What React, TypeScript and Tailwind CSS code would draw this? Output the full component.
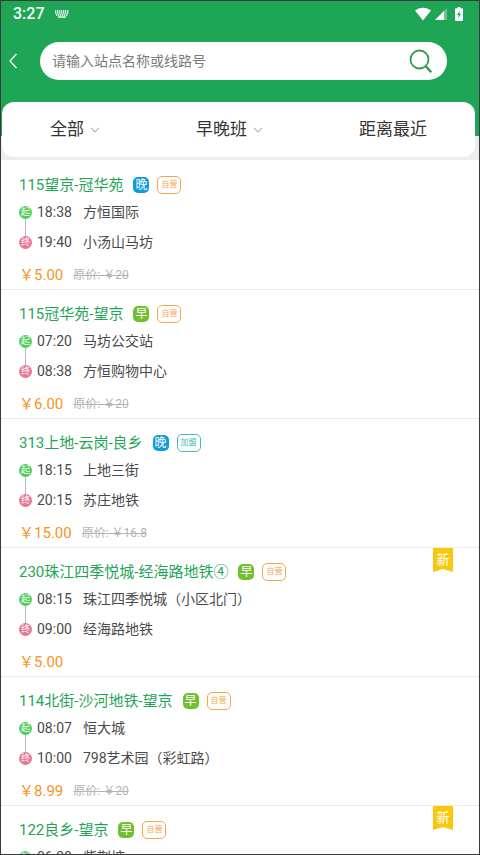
import clsx from "clsx";

type Shift = "早" | "晚";
type Operator = "自营" | "加盟";

interface Stop {
  time: string;
  name: string;
}

interface Line {
  title: string;
  shift: Shift;
  operator: Operator;
  from: Stop;
  to: Stop;
  price: string;
  oldPrice?: string;
  isNew?: boolean;
}

const lines: Line[] = [
  {
    title: "115望京-冠华苑",
    shift: "晚",
    operator: "自营",
    from: { time: "18:38", name: "方恒国际" },
    to: { time: "19:40", name: "小汤山马坊" },
    price: "5.00",
    oldPrice: "20",
  },
  {
    title: "115冠华苑-望京",
    shift: "早",
    operator: "自营",
    from: { time: "07:20", name: "马坊公交站" },
    to: { time: "08:38", name: "方恒购物中心" },
    price: "6.00",
    oldPrice: "20",
  },
  {
    title: "313上地-云岗-良乡",
    shift: "晚",
    operator: "加盟",
    from: { time: "18:15", name: "上地三街" },
    to: { time: "20:15", name: "苏庄地铁" },
    price: "15.00",
    oldPrice: "16.8",
  },
  {
    title: "230珠江四季悦城-经海路地铁④",
    shift: "早",
    operator: "自营",
    from: { time: "08:15", name: "珠江四季悦城（小区北门）" },
    to: { time: "09:00", name: "经海路地铁" },
    price: "5.00",
    isNew: true,
  },
  {
    title: "114北街-沙河地铁-望京",
    shift: "早",
    operator: "自营",
    from: { time: "08:07", name: "恒大城" },
    to: { time: "10:00", name: "798艺术园（彩虹路）" },
    price: "8.99",
    oldPrice: "20",
  },
  {
    title: "122良乡-望京",
    shift: "早",
    operator: "自营",
    from: { time: "06:30", name: "紫荆塘" },
    to: { time: "08:20", name: "望京" },
    price: "8.00",
    isNew: true,
  },
];

const filters = [
  { label: "全部", hasMenu: true },
  { label: "早晚班", hasMenu: true },
  { label: "距离最近", hasMenu: false },
];

function StatusBar() {
  return (
    <div className="flex h-[25px] items-center justify-between pl-3 pr-4 text-white">
      <div className="flex items-center gap-2.5">
        <span className="text-base font-medium">3:27</span>
        <svg className="h-2 w-3.5" viewBox="0 0 14 8" fill="none" stroke="currentColor">
          <path d="M0 1h14M0 3h14M1 5h12" strokeWidth="1.4" strokeDasharray="1.4 .6" />
          <path d="M3 7h8" strokeWidth="1.4" />
        </svg>
      </div>
      <div className="flex items-center">
        <svg className="h-3.5 w-4" viewBox="0 0 16 14" fill="currentColor">
          <path d="M0 3.6C4.4-.3 11.6-.3 16 3.6L8 13.4z" />
        </svg>
        <svg className="ml-1 size-3" viewBox="0 0 12 12" fill="currentColor">
          <path d="M12 0v12H0z" opacity=".35" />
          <path d="M9 3v9H0z" />
        </svg>
        <svg className="ml-2 h-3.5 w-2" viewBox="0 0 8 14">
          <path d="M2.6 0h2.8v1.2H7q1 0 1 1V13q0 1-1 1H1q-1 0-1-1V2.2q0-1 1-1h1.6z" fill="#fff" />
          <path d="M4.8 3.6 2 8h1.7l-.4 3.600L6 7H4.400z" fill="#1fa556" />
        </svg>
      </div>
    </div>
  );
}

function SearchBar() {
  return (
    <div className="flex items-center pl-2 pr-8 pt-4">
      <button type="button" aria-label="返回" className="mr-[23px] text-white">
        <svg className="h-4 w-2" viewBox="0 0 8 16" fill="none" stroke="currentColor" strokeWidth="1.3">
          <path d="M7.5 1 1 8l6.500 7" />
        </svg>
      </button>
      <form className="flex h-[38px] flex-1 items-center rounded-full bg-white pl-3 pr-3.5">
        <input
          type="search"
          aria-label="搜索站点或线路"
          placeholder="请输入站点名称或线路号"
          className="min-w-0 flex-1 bg-transparent text-sm text-gray-800 outline-none placeholder:text-[#7b7b7b]"
        />
        <button type="button" aria-label="搜索">
          <svg className="size-6" viewBox="0 0 24 24" fill="none" stroke="#2f9e4b">
            <circle cx="10.5" cy="10.5" r="9" strokeWidth="1.8" />
            <path d="m16.6 17 5.600 6.200" strokeWidth="2.4" />
          </svg>
        </button>
      </form>
    </div>
  );
}

function FilterTabs() {
  return (
    <div className="relative ml-px mr-1 -mt-[34px] flex h-[55px] items-center justify-between rounded-xl bg-white px-12">
      {filters.map((filter) => (
        <button key={filter.label} type="button" className="flex items-center gap-1.5 text-[17px] text-[#333]">
          {filter.label}
          {filter.hasMenu && (
            <svg className="h-1.5 w-2.5" viewBox="0 0 10 6" fill="none" stroke="#b5b5b5" strokeWidth="1.2">
              <path d="m1 .8 4 4 4-4" />
            </svg>
          )}
        </button>
      ))}
    </div>
  );
}

function StopRow({ stop, mark }: { stop: Stop; mark: "起" | "终" }) {
  return (
    <div className="flex h-[30px] items-center text-sm text-[#4a4a4a]">
      <span
        className={clsx(
          "relative flex size-[13px] items-center justify-center rounded-full text-[9px] leading-none text-white",
          mark === "起" ? "bg-[#4fcf5c]" : "bg-[#e87696]"
        )}
      >
        {mark}
      </span>
      <span className="ml-[5px] w-[46px]">{stop.time}</span>
      <span>{stop.name}</span>
    </div>
  );
}

function LineCard({ line }: { line: Line }) {
  return (
    <li className="relative h-[129px] shrink-0 border-b border-[#ececec] bg-white px-[18px] pt-3">
      <div className="flex h-6 items-center">
        <h2 className="text-[15px] text-[#1fa556]">{line.title}</h2>
        <span
          className={clsx(
            "ml-2.5 flex size-4 items-center justify-center rounded-[5px] text-xs leading-none text-white",
            line.shift === "早" ? "bg-[#6fc02c]" : "bg-[#109bdc]"
          )}
        >
          {line.shift}
        </span>
        <span
          className={clsx(
            "ml-2 flex h-[18px] w-6 items-center justify-center rounded-[5px] border text-[8px] leading-none",
            line.operator === "自营" ? "border-[#f3a94a] text-[#f3a94a]" : "border-[#45bdb3] text-[#45bdb3]"
          )}
        >
          {line.operator}
        </span>
      </div>

      <div className="relative">
        {/* connector between the two stops */}
        <div className="absolute left-1.5 top-5 h-5 w-px bg-[#bbb]" />
        <StopRow stop={line.from} mark="起" />
        <StopRow stop={line.to} mark="终" />
      </div>

      <div className="mt-2 flex items-center gap-2.5">
        <span className="text-[15px] leading-5 text-[#f7931e]">￥{line.price}</span>
        {line.oldPrice && <s className="text-xs text-[#b3b3b3]">原价: ￥{line.oldPrice}</s>}
      </div>

      {line.isNew && (
        <div className="absolute right-[26px] top-0 h-6 w-5 bg-[#f9c80e] pt-1 text-center text-[13px] leading-4 text-white [clip-path:polygon(0_0,100%_0,100%_100%,50%_88%,0_100%)]">
          新
        </div>
      )}
    </li>
  );
}

export default function App() {
  return (
    <div className="flex h-screen flex-col overflow-hidden border border-[#3a3a3a] bg-[#ededed] font-[Roboto,'Noto_Sans_CJK_SC',sans-serif]">
      <header className="bg-[#1fa556] pb-14">
        <StatusBar />
        <SearchBar />
      </header>
      <FilterTabs />
      <ul className="mt-[3px] flex min-h-0 flex-1 flex-col overflow-y-auto bg-white pt-px [scrollbar-width:none]">
        {lines.map((line) => (
          <LineCard key={line.title} line={line} />
        ))}
      </ul>
    </div>
  );
}
